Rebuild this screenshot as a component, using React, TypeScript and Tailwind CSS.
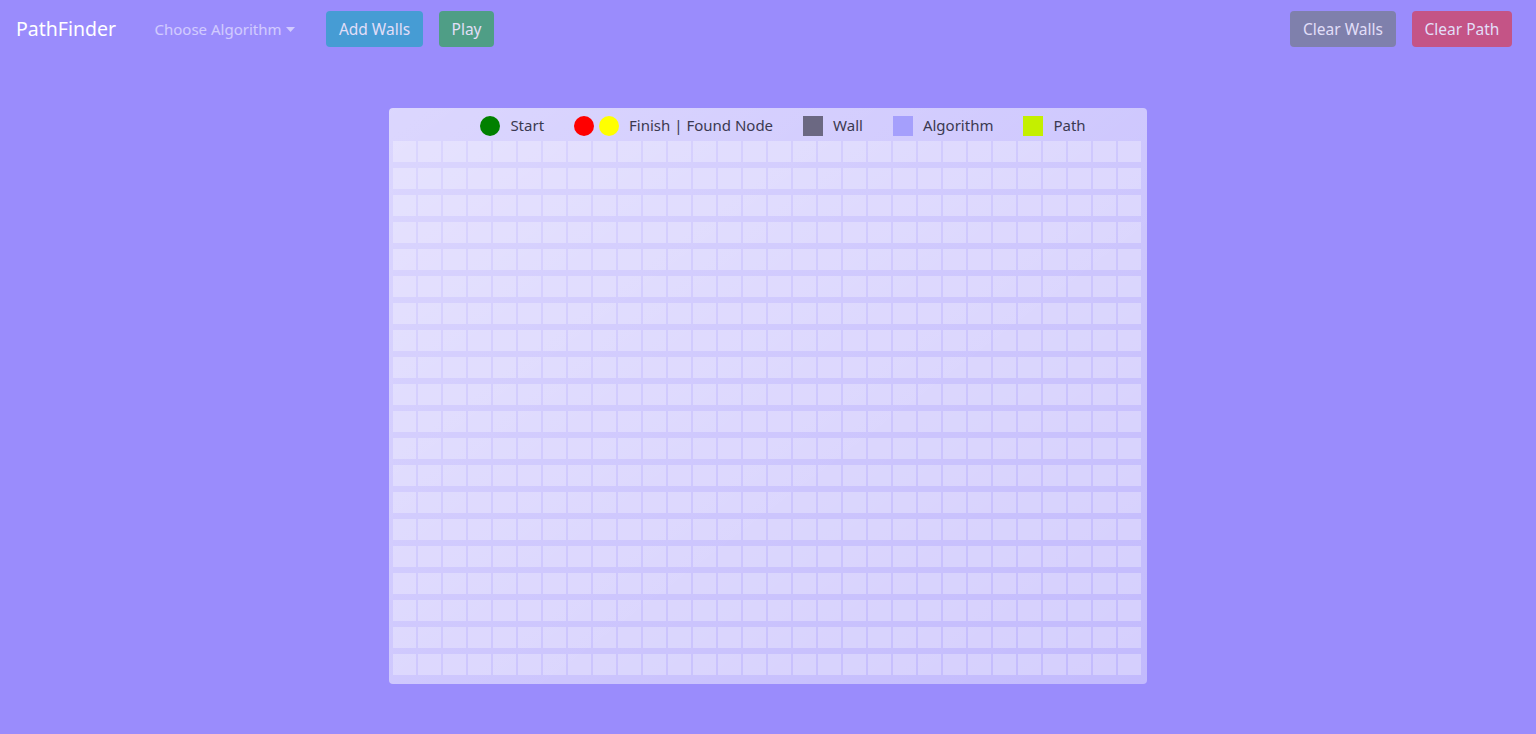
const COLS = 30;
const ROWS = 20;

function Legend() {
  return (
    <div className="flex h-[33px] items-center justify-center pt-[2px] text-[15px] text-[#3b3950]">
      <div className="ml-[30px] flex items-center">
        <span className="h-5 w-5 rounded-full bg-[#008000]" />
        <span className="ml-[10px]">Start</span>
      </div>
      <div className="ml-[30px] flex items-center">
        <span className="h-5 w-5 rounded-full bg-[#ff0000]" />
        <span className="ml-[5px] h-5 w-5 rounded-full bg-[#ffff00]" />
        <span className="ml-[10px]">Finish | Found Node</span>
      </div>
      <div className="ml-[30px] flex items-center">
        <span className="h-5 w-5 bg-[#6b6882]" />
        <span className="ml-[10px]">Wall</span>
      </div>
      <div className="ml-[30px] flex items-center">
        <span className="h-5 w-5 bg-[#a59ffc]" />
        <span className="ml-[10px]">Algorithm</span>
      </div>
      <div className="ml-[30px] flex items-center">
        <span className="h-5 w-5 bg-[#c4ef00]" />
        <span className="ml-[10px]">Path</span>
      </div>
    </div>
  );
}

function Grid() {
  const cells = Array.from({ length: COLS * ROWS });
  return (
    <div className="grid grid-cols-[repeat(30,23px)] grid-rows-[repeat(20,21px)] gap-x-[2px] gap-y-[6px] pl-[4px]">
      {cells.map((_, i) => (
        <div key={i} className="bg-white/30" />
      ))}
    </div>
  );
}

export default function App() {
  return (
    <div
      className="min-h-[734px] w-full bg-[#9a8cfc]"
      style={{ fontFamily: '"Noto Sans", "Open Sans", sans-serif' }}
    >
      <header className="flex h-[58px] items-center px-4">
        <span className="w-[100px] text-[19.5px] text-white">PathFinder</span>
        <button className="ml-[37px] flex w-[144px] items-center justify-center text-[15px] text-white/55">
          Choose Algorithm
          <svg width="9" height="5" viewBox="0 0 9 5" className="ml-[5px]">
            <path d="M0 0h9L4.5 5z" fill="currentColor" />
          </svg>
        </button>
        <button className="ml-[29px] h-9 w-[97px] rounded bg-[#469cd4] pt-[2px] text-[15.5px] text-[#e2def8]">
          Add Walls
        </button>
        <button className="ml-4 h-9 w-[55px] rounded bg-[#4f9e86] pt-[2px] text-[15.5px] text-[#e2def8]">
          Play
        </button>
        <div className="ml-auto flex items-center gap-4 pr-2">
          <button className="h-9 w-[106px] rounded bg-[#7f80ac] pt-[2px] text-[15.5px] text-[#e2def8]">
            Clear Walls
          </button>
          <button className="h-9 w-[100px] rounded bg-[#c45486] pt-[2px] text-[15.5px] text-[#e2def8]">
            Clear Path
          </button>
        </div>
      </header>
      <main className="pt-[50px]">
        <div className="mx-auto h-[576px] w-[758px] rounded bg-gradient-to-br from-white/65 to-white/40">
          <Legend />
          <Grid />
        </div>
      </main>
    </div>
  );
}
